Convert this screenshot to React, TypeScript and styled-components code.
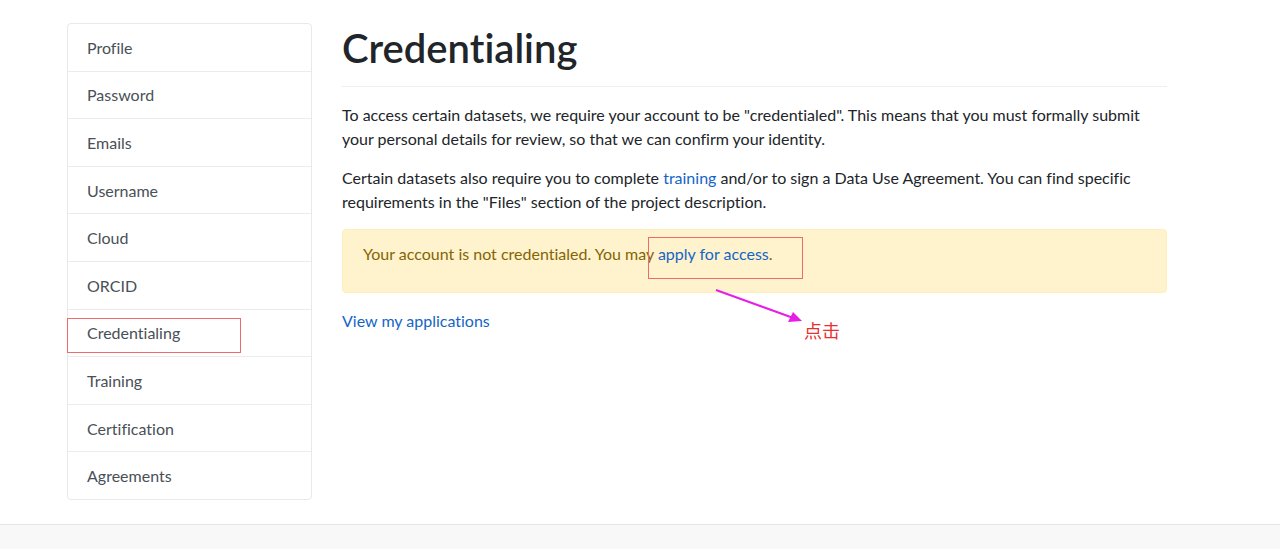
import React from "react";
import styled, { createGlobalStyle } from "styled-components";

const Global = createGlobalStyle`
  html, body { margin: 0; padding: 0; background: #fff; }
  body {
    font-family: Lato, "Noto Sans", "Noto Sans CJK SC", sans-serif;
    font-size: 16px;
    line-height: 24px;
    color: #212529;
    font-variant-ligatures: none;
  }
  * { box-sizing: border-box; }
`;

const Page = styled.div`
  position: relative;
  width: 1280px;
  height: 549px;
  display: flex;
  flex-direction: column;
  overflow: hidden;
`;

const Body = styled.div`
  flex: 1;
  display: flex;
  gap: 30px;
  padding: 23px 0 0 67px;
`;

const Sidebar = styled.nav`
  width: 245px;
  flex: none;
  align-self: flex-start;
  display: flex;
  flex-direction: column;
  border: 1px solid #e9e9e9;
  border-radius: 4px;
`;

const NavItem = styled.a`
  display: block;
  padding: 11.8px 19px 11.8px;
  line-height: 23px;
  color: #495057;
  text-decoration: none;
  border-top: 1px solid #ececec;
  &:first-child { border-top: none; }
`;

const Main = styled.main`
  width: 825px;
  flex: none;
`;

const Title = styled.h1`
  margin: 0;
  font-size: 40px;
  line-height: 48px;
  font-weight: 600;
  color: #212529;
  padding-top: 1px;
`;

const Rule = styled.hr`
  border: none;
  border-top: 1px solid #eeeeee;
  margin: 14px 0 16px;
`;

const Para = styled.p`
  margin: 0 0 15px;
`;

const Link = styled.a`
  color: #1565c6;
  text-decoration: none;
`;

const Alert = styled.div`
  background: #fff3cd;
  border: 1px solid #ffeeba;
  border-radius: 4px;
  color: #856404;
  padding: 12px 20px 26px;
  margin-bottom: 16px;
`;

const Footer = styled.footer`
  height: 25px;
  flex: none;
  background: #f8f8f8;
  border-top: 1px solid #e5e5e5;
`;

const MarkBox = styled.div<{ $x: number; $y: number; $w: number; $h: number }>`
  position: absolute;
  left: ${(p) => p.$x}px;
  top: ${(p) => p.$y}px;
  width: ${(p) => p.$w}px;
  height: ${(p) => p.$h}px;
  border: 1px solid #ee6b6b;
  pointer-events: none;
`;

const Arrow = styled.svg`
  position: absolute;
  left: 0;
  top: 0;
  pointer-events: none;
`;

const Note = styled.div`
  position: absolute;
  left: 804px;
  top: 317px;
  font-family: "Noto Sans CJK SC", sans-serif;
  font-size: 18px;
  line-height: 26px;
  color: #e8302f;
`;

const items = [
  "Profile",
  "Password",
  "Emails",
  "Username",
  "Cloud",
  "ORCID",
  "Credentialing",
  "Training",
  "Certification",
  "Agreements",
];

export default function App() {
  return (
    <>
      <Global />
      <Page>
        <Body>
          <Sidebar>
            {items.map((t) => (
              <NavItem key={t} href="#">
                {t}
              </NavItem>
            ))}
          </Sidebar>
          <Main>
            <Title>Credentialing</Title>
            <Rule />
            <Para>
              To access certain datasets, we require your account to be "credentialed". This means that you must formally submit
              your personal details for review, so that we can confirm your identity.
            </Para>
            <Para>
              Certain datasets also require you to complete <Link href="#">training</Link> and/or to sign a Data Use Agreement. You can find specific
              requirements in the "Files" section of the project description.
            </Para>
            <Alert>
              Your account is not credentialed. You may <Link href="#">apply for access</Link>.
            </Alert>
            <Link href="#">View my applications</Link>
          </Main>
        </Body>
        <Footer />
        <MarkBox $x={648} $y={237} $w={155} $h={42} />
        <MarkBox $x={67} $y={318} $w={174} $h={35} />
        <Arrow width="1280" height="549" viewBox="0 0 1280 549">
          <line x1="716" y1="290" x2="792" y2="317.5" stroke="#e61ee6" strokeWidth="2" />
          <polygon points="802,321 788,322 793,312" fill="#e61ee6" />
        </Arrow>
        <Note>点击</Note>
      </Page>
    </>
  );
}
